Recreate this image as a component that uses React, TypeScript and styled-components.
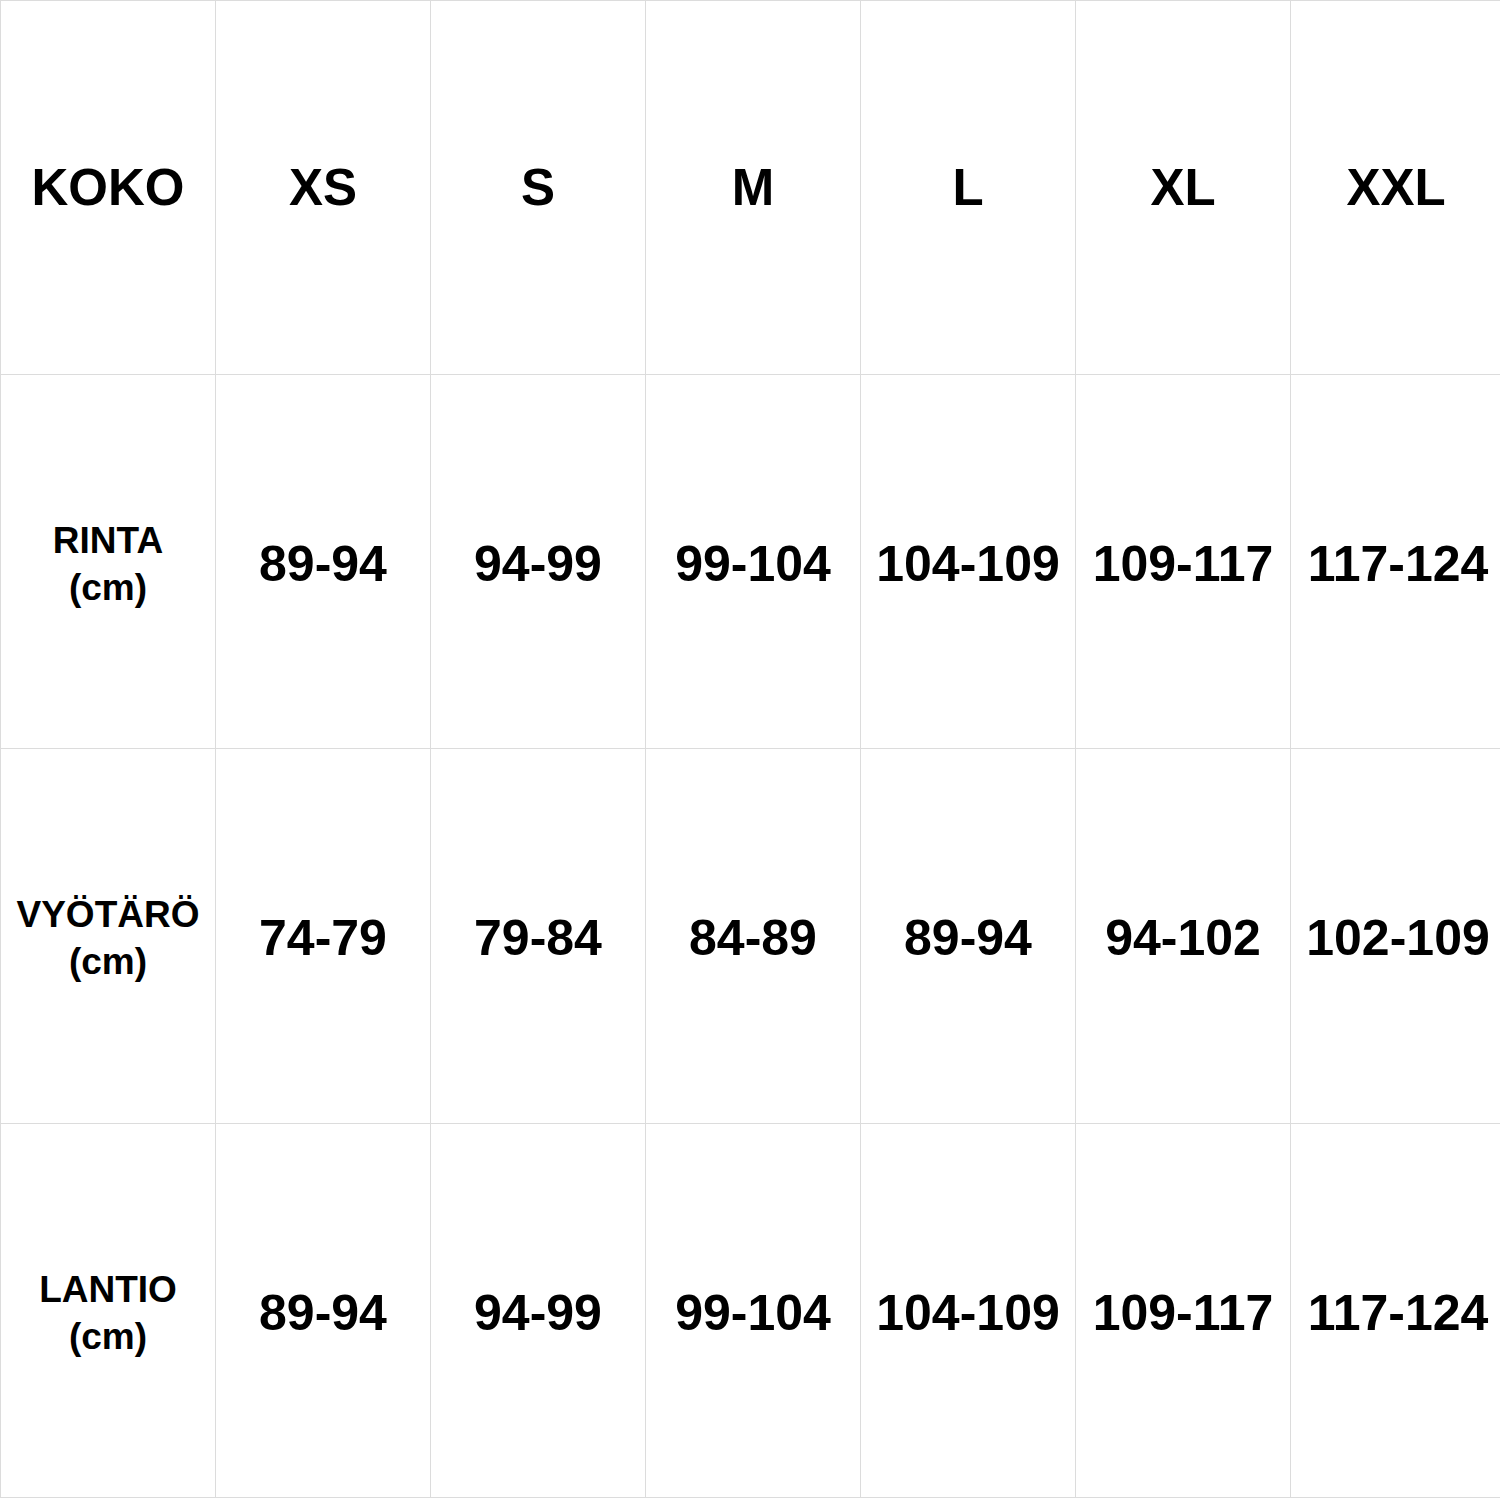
import React from "react";
import styled, { createGlobalStyle } from "styled-components";

const Global = createGlobalStyle`
  html, body { margin: 0; padding: 0; background: #ffffff; }
  body { font-family: "Liberation Sans", Arial, sans-serif; }
`;

const Table = styled.div`
  display: grid;
  grid-template-columns: repeat(6, 215px) 210px;
  grid-template-rows: 374px 374px 375px 374px;
  width: 1500px;
  border-top: 1px solid #dcdcdc;
  border-left: 1px solid #dcdcdc;
  box-sizing: border-box;
  background: #ffffff;
  color: #000000;
`;

const Cell = styled.div<{ $last?: boolean }>`
  display: flex;
  flex-direction: column;
  align-items: center;
  justify-content: center;
  text-align: center;
  border-right: ${(p) => (p.$last ? "none" : "1px solid #dcdcdc")};
  border-bottom: 1px solid #dcdcdc;
  box-sizing: border-box;
  font-weight: 700;
  white-space: nowrap;
`;

const Header = styled.span`
  font-size: 51px;
  line-height: 1;
`;

const Value = styled.span<{ $shift?: number }>`
  font-size: 50px;
  line-height: 1;
  padding-top: 4px;
  padding-left: ${(p) => p.$shift ?? 0}px;
`;

const Label = styled.span`
  font-size: 37px;
  line-height: 47px;
  padding-top: 4px;
`;

const sizes = ["XS", "S", "M", "L", "XL", "XXL"];

const rows: { label: string; values: string[] }[] = [
  { label: "RINTA", values: ["89-94", "94-99", "99-104", "104-109", "109-117", "117-124"] },
  { label: "VYÖTÄRÖ", values: ["74-79", "79-84", "84-89", "89-94", "94-102", "102-109"] },
  { label: "LANTIO", values: ["89-94", "94-99", "99-104", "104-109", "109-117", "117-124"] },
];

export default function App() {
  return (
    <>
      <Global />
      <Table>
        <Cell>
          <Header>KOKO</Header>
        </Cell>
        {sizes.map((s, i) => (
          <Cell key={s} $last={i === sizes.length - 1}>
            <Header>{s}</Header>
          </Cell>
        ))}
        {rows.map((r) => (
          <React.Fragment key={r.label}>
            <Cell>
              <Label>
                {r.label}
                <br />
                (cm)
              </Label>
            </Cell>
            {r.values.map((v, i) => (
              <Cell key={i} $last={i === r.values.length - 1}>
                <Value $shift={i === r.values.length - 1 ? 4 : 0}>{v}</Value>
              </Cell>
            ))}
          </React.Fragment>
        ))}
      </Table>
    </>
  );
}
